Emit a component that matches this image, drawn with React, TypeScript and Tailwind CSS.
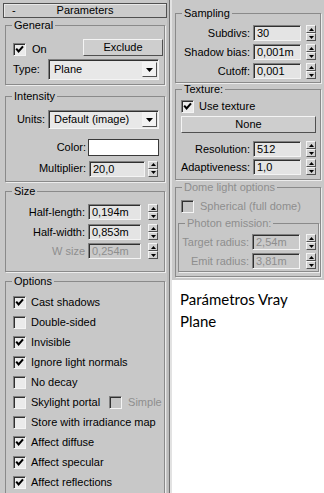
import React from "react";

const sunken =
  "border border-t-[#808080] border-l-[#808080] border-r-[#f4f4f4] border-b-[#f4f4f4] shadow-[inset_1px_1px_0_#303030]";
const raised =
  "border border-t-[#f4f4f4] border-l-[#f4f4f4] border-r-[#505050] border-b-[#505050]";

function Check({ on, disabled }: { on?: boolean; disabled?: boolean }) {
  return (
    <div
      className={`flex h-[13px] w-[13px] shrink-0 items-center justify-center ${sunken} ${
        disabled ? "bg-[#c4c4c4]" : "bg-[#ebebeb]"
      }`}
    >
      {on && (
        <svg width="9" height="9" viewBox="0 0 9 9">
          <path d="M1.2 3.6 L3.6 6.4 L8 1.4" fill="none" stroke="#000" strokeWidth="2.1" />
        </svg>
      )}
    </div>
  );
}

function Spin() {
  return (
    <div className="flex h-[16px] w-[10px] shrink-0 flex-col">
      <div className={`flex flex-1 items-center justify-center bg-[#d2d2d2] ${raised}`}>
        <svg width="5" height="3" viewBox="0 0 5 3">
          <path d="M0 3H5L2.5 0Z" fill="#000" />
        </svg>
      </div>
      <div className={`flex flex-1 items-center justify-center bg-[#d2d2d2] ${raised}`}>
        <svg width="5" height="3" viewBox="0 0 5 3">
          <path d="M0 0H5L2.5 3Z" fill="#000" />
        </svg>
      </div>
    </div>
  );
}

function Field({ value, w, disabled }: { value: string; w: string; disabled?: boolean }) {
  return (
    <div
      className={`h-[16px] shrink-0 ${w} ${sunken} pl-[3px] text-[11px] leading-[14px] ${
        disabled ? "bg-[#cacaca] text-[#8e8e8e]" : "bg-[#e4e4e4] text-black"
      }`}
    >
      {value}
    </div>
  );
}

function Drop({ value, h }: { value: string; h: string }) {
  return (
    <div className={`flex w-[111px] items-center bg-[#e8e8e8] ${h} ${sunken}`}>
      <span className="flex-1 pl-[5px] text-[11px] leading-[13px]">{value}</span>
      <div className={`mr-[1px] flex h-[15px] w-[15px] items-center justify-center bg-[#f2f2f2] ${raised}`}>
        <svg width="7" height="4" viewBox="0 0 7 4">
          <path d="M0 0H7L3.5 4Z" fill="#000" />
        </svg>
      </div>
    </div>
  );
}

function Group({
  title,
  className,
  disabled,
  children,
}: {
  title: string;
  className: string;
  disabled?: boolean;
  children: React.ReactNode;
}) {
  return (
    <fieldset className={`border border-[#8a8a8a] shadow-[1px_1px_0_#ececec] ${className}`}>
      <legend
        className={`ml-[6px] px-[2px] text-[11px] leading-[13px] ${
          disabled ? "text-[#8e8e8e]" : "text-black"
        }`}
      >
        {title}
      </legend>
      {children}
    </fieldset>
  );
}

const options: [string, boolean][] = [
  ["Cast shadows", true],
  ["Double-sided", false],
  ["Invisible", true],
  ["Ignore light normals", true],
  ["No decay", false],
  ["Skylight portal", false],
  ["Store with irradiance map", false],
  ["Affect diffuse", true],
  ["Affect specular", true],
  ["Affect reflections", true],
];

export default function App() {
  return (
    <div className="flex h-[493px] w-[324px] overflow-hidden bg-[#c8c8c8] font-['Liberation_Sans',Arial,sans-serif] text-[11px] text-black">
      {/* left rollout */}
      <div className="flex w-[167px] shrink-0 flex-col pl-[3px] pt-[3px]">
        <div className="flex h-[17px] w-[164px] items-center border border-[#505050] bg-[#cbcbcb] shadow-[inset_1px_1px_0_#e8e8e8]">
          <span className="w-[20px] pl-[8px] leading-[13px]">-</span>
          <span className="flex-1 pr-[20px] text-center leading-[13px]">Parameters</span>
        </div>

        <Group title="General" className="ml-[2px] mt-[1px] w-[160px] pb-[4px]">
          <div className="mt-[7px] flex h-[17px] items-end pl-[7px] pr-[1px]">
            <Check on />
            <span className="ml-[6px] leading-[13px]">On</span>
            <div className={`ml-auto flex h-[17px] w-[80px] items-center justify-center bg-[#cecece] ${raised}`}>
              Exclude
            </div>
          </div>
          <div className="mt-[3px] flex items-center pl-[7px]">
            <span className="w-[35px] leading-[13px]">Type:</span>
            <Drop value="Plane" h="h-[21px]" />
          </div>
        </Group>

        <Group title="Intensity" className="ml-[2px] mt-[5px] w-[160px] pb-[4px]">
          <div className="mt-[7px] flex items-center justify-end gap-[3px] pr-[5px]">
            <span className="leading-[13px]">Units:</span>
            <Drop value="Default (image)" h="h-[19px]" />
          </div>
          <div className="mt-[10px] flex items-center justify-end gap-[2px] pr-[5px]">
            <span className="leading-[13px]">Color:</span>
            <div className="h-[17px] w-[71px] border border-[#3a3a3a] bg-white" />
          </div>
          <div className="mt-[4px] flex h-[17px] items-center justify-end pr-[6px]">
            <span className="mr-[3px] leading-[13px]">Multiplier:</span>
            <Field value="20,0" w="w-[56px]" />
            <div className="ml-[3px]">
              <Spin />
            </div>
          </div>
        </Group>

        <Group title="Size" className="ml-[2px] mt-[3px] w-[160px] pb-[12px]">
          <div className="mt-[6px] flex items-center justify-end pr-[6px]">
            <span className="mr-[3px] leading-[13px]">Half-length:</span>
            <Field value="0,194m" w="w-[53px]" />
            <div className="ml-[7px]">
              <Spin />
            </div>
          </div>
          <div className="mt-[4px] flex items-center justify-end pr-[6px]">
            <span className="mr-[3px] leading-[13px]">Half-width:</span>
            <Field value="0,853m" w="w-[53px]" />
            <div className="ml-[7px]">
              <Spin />
            </div>
          </div>
          <div className="mt-[3px] flex items-center justify-end pr-[6px]">
            <span className="mr-[3px] leading-[13px] text-[#8e8e8e]">W size</span>
            <Field value="0,254m" w="w-[53px]" disabled />
            <div className="ml-[7px]">
              <Spin />
            </div>
          </div>
        </Group>

        <Group title="Options" className="ml-[2px] mt-[3px] w-[160px] pb-[40px]">
          <div className="mt-[4px] flex flex-col">
            {options.map(([label, on]) => (
              <div key={label} className="flex h-[20px] items-center pl-[7px]">
                <Check on={on} />
                <span className="ml-[5px] leading-[13px]">{label}</span>
                {label === "Skylight portal" && (
                  <>
                    <div className="ml-[9px]">
                      <Check disabled />
                    </div>
                    <span className="ml-[6px] leading-[13px] text-[#8e8e8e]">Simple</span>
                  </>
                )}
              </div>
            ))}
          </div>
        </Group>
      </div>

      {/* divider */}
      <div className="flex shrink-0">
        <div className="w-[2px] bg-[#bcbcbc]" />
        <div className="w-[1px] bg-[#6e6e6e]" />
        <div className="w-[2px] bg-[#e2e2e2]" />
      </div>

      {/* right rollout */}
      <div className="flex min-w-0 flex-1 flex-col">
        <div className="flex flex-col pl-[3px] pt-[7px]">
          <Group title="Sampling" className="w-[146px] pb-[3px]">
            {[
              ["Subdivs:", "30", "mt-[5px]"],
              ["Shadow bias:", "0,001m", "mt-[3px]"],
              ["Cutoff:", "0,001", "mt-[3px]"],
            ].map(([l, v, m]) => (
              <div key={l} className={`flex items-center justify-end pr-[4px] ${m}`}>
                <span className="mr-[3px] leading-[13px]">{l}</span>
                <Field value={v} w="w-[48px]" />
                <div className="ml-[5px]">
                  <Spin />
                </div>
              </div>
            ))}
          </Group>

          <Group title="Texture:" className="w-[146px] pb-[4px]">
            <div className="mt-[3px] flex h-[14px] items-center pl-[5px]">
              <Check on />
              <span className="ml-[5px] leading-[13px]">Use texture</span>
            </div>
            <div className={`ml-[5px] mt-[3px] flex h-[17px] w-[135px] items-center justify-center bg-[#cecece] ${raised}`}>
              None
            </div>
            <div className="mt-[8px] flex items-center justify-end pr-[4px]">
              <span className="mr-[3px] leading-[13px]">Resolution:</span>
              <Field value="512" w="w-[48px]" />
              <div className="ml-[5px]">
                <Spin />
              </div>
            </div>
            <div className="mt-[2px] flex items-center justify-end pr-[4px]">
              <span className="mr-[3px] leading-[13px]">Adaptiveness:</span>
              <Field value="1,0" w="w-[48px]" />
              <div className="ml-[5px]">
                <Spin />
              </div>
            </div>
          </Group>

          <Group title="Dome light options" disabled className="mt-[1px] w-[146px] pb-[4px]">
            <div className="mt-[5px] flex h-[14px] items-center pl-[5px]">
              <Check disabled />
              <span className="ml-[6px] leading-[13px] text-[#8e8e8e]">Spherical (full dome)</span>
            </div>
            <Group title="Photon emission:" disabled className="ml-[2px] mt-[4px] w-[141px] pb-[2px]">
              <div className="mt-[4px] flex items-center justify-end pr-[2px]">
                <span className="mr-[3px] leading-[13px] text-[#8e8e8e]">Target radius:</span>
                <Field value="2,54m" w="w-[48px]" disabled />
                <div className="ml-[6px]">
                  <Spin />
                </div>
              </div>
              <div className="mt-[3px] flex items-center justify-end pr-[2px]">
                <span className="mr-[3px] leading-[13px] text-[#8e8e8e]">Emit radius:</span>
                <Field value="3,81m" w="w-[48px]" disabled />
                <div className="ml-[6px]">
                  <Spin />
                </div>
              </div>
            </Group>
          </Group>
          <div className="h-[3px]" />
        </div>

        <div className="flex-1 bg-white pl-[8px] pt-[8px] font-['Lato',sans-serif] text-[15px] leading-[22px] text-black">
          Parámetros Vray
          <br />
          Plane
        </div>
      </div>
    </div>
  );
}
